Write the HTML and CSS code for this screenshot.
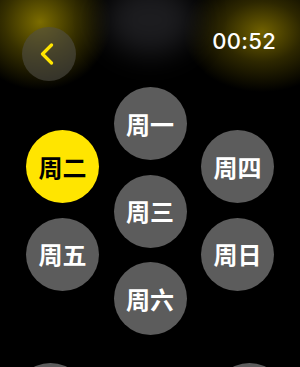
FILE: index.html
```html
<!DOCTYPE html>
<html lang="zh">
<head>
<meta charset="utf-8">
<link rel="stylesheet" href="styles.css">
</head>
<body>
<div class="screen">
  <div class="ghost"></div>
  <header class="top">
    <button class="back" aria-label="返回">
      <svg width="14" height="22" viewBox="0 0 14 22"><path d="M11.5 2 L2.5 11 L11.5 20" fill="none" stroke="#ffe500" stroke-width="3.2" stroke-linecap="round" stroke-linejoin="round"/></svg>
    </button>
    <div class="time">00:52</div>
  </header>
  <main class="comb">
    <div class="col side">
      <div class="day on">周二</div>
      <div class="day">周五</div>
      <div class="day tail left"></div>
    </div>
    <div class="col mid">
      <div class="day">周一</div>
      <div class="day">周三</div>
      <div class="day">周六</div>
    </div>
    <div class="col side">
      <div class="day">周四</div>
      <div class="day">周日</div>
      <div class="day tail right"></div>
    </div>
  </main>
</div>
</body>
</html>
```
FILE: styles.css
```css
html, body {
  margin: 0;
  padding: 0;
  background: #000;
}
.screen {
  position: relative;
  width: 300px;
  height: 367px;
  overflow: hidden;
  background:
    radial-gradient(ellipse 72px 68px at 40px 22px, rgba(130,114,0,0.95), rgba(100,88,0,0.55) 50%, rgba(0,0,0,0) 100%),
    radial-gradient(ellipse 80px 60px at 262px 32px, rgba(125,108,0,0.9), rgba(90,78,0,0.5) 50%, rgba(0,0,0,0) 100%),
    #000;
  font-family: "Noto Sans CJK SC", "Noto Sans", sans-serif;
}
.ghost {
  position: absolute;
  left: 105px;
  top: -15px;
  width: 90px;
  height: 70px;
  border-radius: 50%;
  background: #1c1c1f;
  filter: blur(14px);
}
.top {
  position: relative;
  display: flex;
  justify-content: space-between;
  align-items: flex-start;
  padding: 27px 24px 0 22px;
  height: 54px;
}
.back {
  width: 54px;
  height: 54px;
  border: 0;
  padding: 0;
  border-radius: 50%;
  background: rgba(80,78,70,0.6);
  display: flex;
  align-items: center;
  justify-content: center;
}
.back svg {
  margin-left: -4px;
}
.time {
  margin-top: 3px;
  font-family: Inter, "Noto Sans", sans-serif;
  font-weight: 500;
  font-size: 22px;
  line-height: 22px;
  color: #fff;
  letter-spacing: 0.3px;
}
.comb {
  position: relative;
  display: flex;
  justify-content: center;
  gap: 14.5px;
}
.col {
  display: flex;
  flex-direction: column;
  gap: 14.5px;
}
.mid {
  padding-top: 6px;
}
.side {
  padding-top: 49px;
}
.day {
  width: 73px;
  height: 73px;
  border-radius: 50%;
  background: #5c5c5c;
  color: #fff;
  font-size: 24px;
  font-weight: 700;
  line-height: 1;
  display: flex;
  align-items: center;
  justify-content: center;
}
.day.on {
  background: #ffe500;
  color: #000;
}
.tail {
  margin-top: 58px;
}
.tail.left {
  transform: translateX(-12px);
}
.tail.right {
  transform: translateX(12px);
}
```
